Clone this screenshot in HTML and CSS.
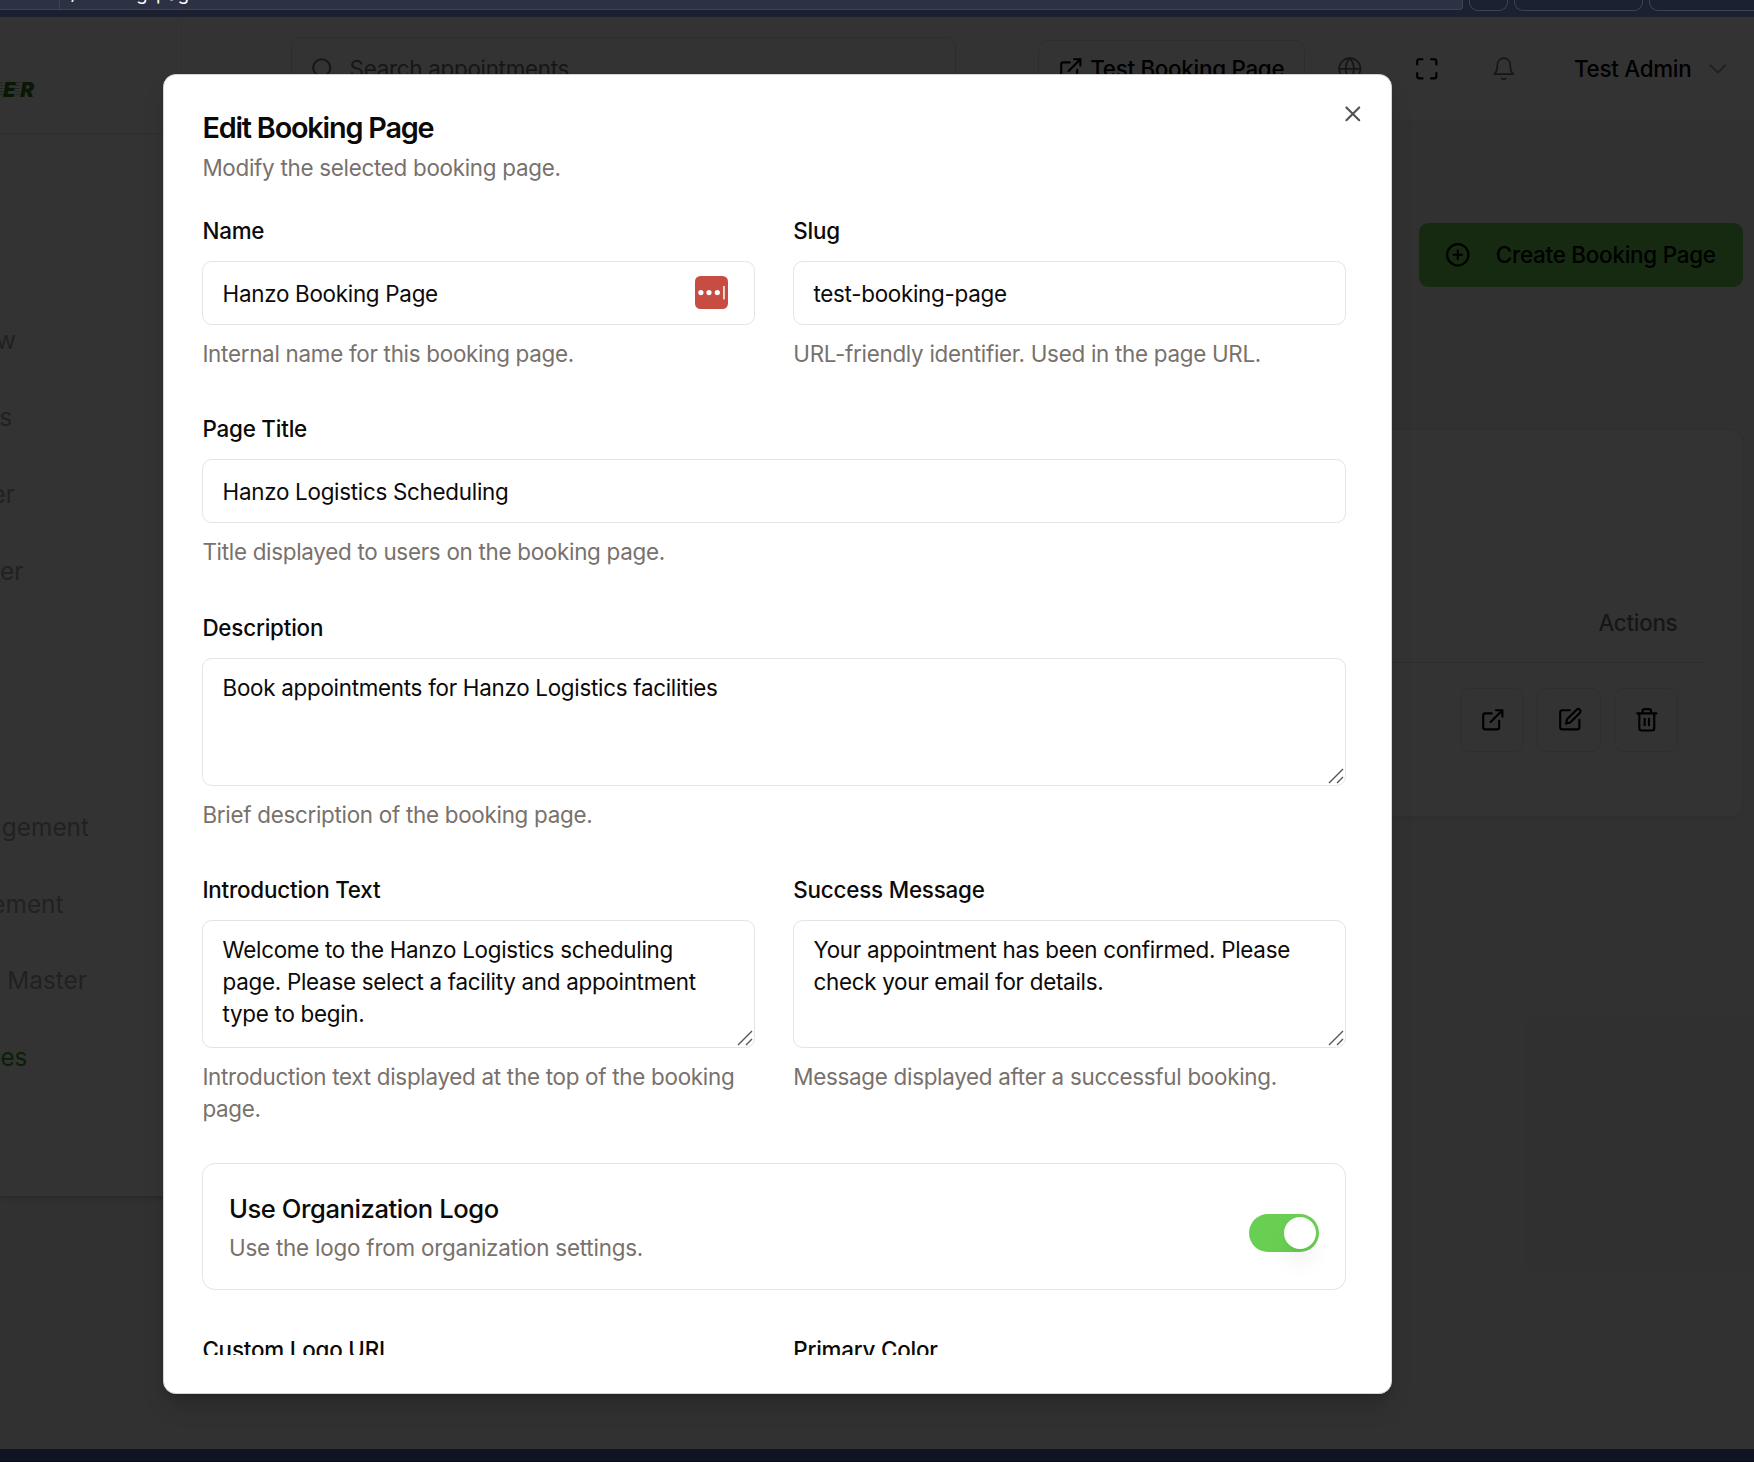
FILE: index.html
```html
<!DOCTYPE html>
<html lang="en">
<head>
<meta charset="utf-8">
<title>Booking Pages</title>
<link rel="stylesheet" href="styles.css">
</head>
<body>
<svg class="defs" aria-hidden="true">
  <symbol id="i-link" viewBox="0 0 24 24"><path d="M15 3h6v6M10 14 21 3M18 13v6a2 2 0 0 1-2 2H5a2 2 0 0 1-2-2V8a2 2 0 0 1 2-2h6"/></symbol>
  <symbol id="i-grip" viewBox="0 0 16 16"><path d="M1 15 15 1M9 15l6-6"/></symbol>
</svg>
<div class="window">
  <div class="toolbar">
    <div class="urlbar"><span class="site"></span><span class="path">/booking-pages</span></div>
    <span class="tool tool-a"></span><span class="tool tool-b"></span><span class="tool tool-c"></span>
  </div>

  <div class="viewport">
    <div class="app">
      <aside class="sidebar">
        <div class="brand"><span class="streak streak-a"></span>E<span class="streak"></span>R</div>
        <nav class="nav">
          <a class="nav-item n1">w</a>
          <a class="nav-item n2">s</a>
          <a class="nav-item n3">er</a>
          <a class="nav-item n4">er</a>
          <a class="nav-item n5">gement</a>
          <a class="nav-item n6">ement</a>
          <a class="nav-item n7">Master</a>
          <a class="nav-item n8 active">es</a>
        </nav>
      </aside>
      <div class="main">
        <header class="header">
          <div class="search">
            <svg class="icon" viewBox="0 0 24 24"><circle cx="11" cy="11" r="8"/><path d="m21 21-4.3-4.3"/></svg>
            <span>Search appointments...</span>
          </div>
          <a class="test-btn"><svg class="icon"><use href="#i-link"/></svg><span>Test Booking Page</span></a>
          <svg class="icon globe" viewBox="0 0 24 24"><circle cx="12" cy="12" r="10"/><path d="M2 12h20M12 2a15 15 0 0 1 0 20 15 15 0 0 1 0-20"/></svg>
          <svg class="icon expand" viewBox="0 0 24 24"><path d="M8 3H5a2 2 0 0 0-2 2v3M21 8V5a2 2 0 0 0-2-2h-3M3 16v3a2 2 0 0 0 2 2h3M16 21h3a2 2 0 0 0 2-2v-3"/></svg>
          <svg class="icon bell" viewBox="0 0 24 24"><path d="M6 8a6 6 0 0 1 12 0c0 7 3 9 3 9H3s3-2 3-9M10.3 21a1.94 1.94 0 0 0 3.4 0"/></svg>
          <span class="user">Test Admin</span>
          <svg class="icon chevron" viewBox="0 0 24 24"><path d="m5 8.5 7 7 7-7"/></svg>
        </header>
        <div class="content">
          <button class="create"><svg class="icon" viewBox="0 0 24 24"><circle cx="12" cy="12" r="10"/><path d="M8 12h8M12 8v8"/></svg>Create Booking Page</button>
          <section class="card">
            <div class="thead">Actions</div>
            <div class="trow">
              <span class="action"><svg class="icon"><use href="#i-link"/></svg></span>
              <span class="action"><svg class="icon" viewBox="0 0 24 24"><path d="M12 3H5a2 2 0 0 0-2 2v14a2 2 0 0 0 2 2h14a2 2 0 0 0 2-2v-7"/><path d="M18.4 2.6a2.1 2.1 0 0 1 3 3L12.4 14.6l-4 1 1-4Z"/></svg></span>
              <span class="action"><svg class="icon" viewBox="0 0 24 24"><path d="M3 6h18M19 6v14a2 2 0 0 1-2 2H7a2 2 0 0 1-2-2V6M8 6V4a2 2 0 0 1 2-2h4a2 2 0 0 1 2 2v2M10 11v6M14 11v6"/></svg></span>
            </div>
          </section>
        </div>
      </div>
    </div>

    <div class="overlay"></div>
    <div class="dialog" role="dialog">
      <svg class="icon close" viewBox="0 0 24 24"><path d="M18 6 6 18M6 6l12 12"/></svg>
      <div class="dialog-body">
        <div class="dialog-head">
          <h2>Edit Booking Page</h2>
          <p>Modify the selected booking page.</p>
        </div>
        <form class="form">
          <div class="cols">
            <div class="field">
              <label>Name</label>
              <div class="control">
                <input type="text" value="Hanzo Booking Page">
                <svg class="pass" viewBox="0 0 33 33"><rect width="33" height="33" rx="5.5" fill="#c74c42"/><g fill="#fff"><circle cx="5.9" cy="16.6" r="2.6"/><circle cx="14" cy="16.6" r="2.6"/><circle cx="22.3" cy="16.6" r="2.6"/><rect x="28.2" y="10" width="1.5" height="13.4"/></g></svg>
              </div>
              <p>Internal name for this booking page.</p>
            </div>
            <div class="field">
              <label>Slug</label>
              <div class="control"><input type="text" value="test-booking-page"></div>
              <p>URL-friendly identifier. Used in the page URL.</p>
            </div>
          </div>
          <div class="field">
            <label>Page Title</label>
            <div class="control"><input type="text" value="Hanzo Logistics Scheduling"></div>
            <p>Title displayed to users on the booking page.</p>
          </div>
          <div class="field">
            <label>Description</label>
            <div class="control"><textarea>Book appointments for Hanzo Logistics facilities</textarea><svg class="grip"><use href="#i-grip"/></svg></div>
            <p>Brief description of the booking page.</p>
          </div>
          <div class="cols">
            <div class="field">
              <label>Introduction Text</label>
              <div class="control"><textarea>Welcome to the Hanzo Logistics scheduling page. Please select a facility and appointment type to begin.</textarea><svg class="grip"><use href="#i-grip"/></svg></div>
              <p>Introduction text displayed at the top of the booking page.</p>
            </div>
            <div class="field">
              <label>Success Message</label>
              <div class="control"><textarea>Your appointment has been confirmed. Please check your email for details.</textarea><svg class="grip"><use href="#i-grip"/></svg></div>
              <p>Message displayed after a successful booking.</p>
            </div>
          </div>
          <div class="toggle-card">
            <div>
              <div class="toggle-title">Use Organization Logo</div>
              <p>Use the logo from organization settings.</p>
            </div>
            <span class="switch"><span class="thumb"></span></span>
          </div>
          <div class="cols">
            <div class="field"><label>Custom Logo URL</label></div>
            <div class="field"><label>Primary Color</label></div>
          </div>
        </form>
      </div>
    </div>
  </div>
  <div class="bottom"></div>
</div>
</body>
</html>
```
FILE: styles.css
```css
* { box-sizing: border-box; }
body {
  margin: 0;
  font-family: Inter, "Liberation Sans", sans-serif;
  font-size: 22.4px;
  line-height: 32px;
  letter-spacing: -.28px;
  color: #0c0a09;
  overflow: hidden;
}
p, h2 { margin: 0; }
.defs { position: absolute; width: 0; height: 0; }
.icon {
  width: 25.6px;
  height: 25.6px;
  flex: none;
  fill: none;
  stroke: currentColor;
  stroke-width: 2;
  stroke-linecap: round;
  stroke-linejoin: round;
}
.window { display: flex; flex-direction: column; width: 1754px; height: 1462px; overflow: hidden; }

/* browser toolbar */
.toolbar { display: flex; height: 17px; flex: none; background: #1c2132; overflow: hidden; }
.urlbar {
  display: flex;
  width: 1463px;
  height: 10px;
  flex: none;
  background: #2d3144;
  border-bottom: 1px solid #3e4258;
  border-right: 1px solid #3e4258;
  border-radius: 0 0 4px 0;
}
.site { width: 60px; height: 9px; border-right: 1px solid #3e4258; }
.path { margin: -19px 0 0 11px; height: 24px; font-size: 18.4px; line-height: 24px; letter-spacing: 0; color: #fff; }
.tool { height: 11px; flex: none; border: 1px solid #3e4258; border-top: 0; border-radius: 0 0 9px 9px; }
.tool-a { width: 39px; margin-left: 6px; }
.tool-b { width: 129px; margin-left: 6px; }
.tool-c { width: 129px; margin-left: 6px; }
.bottom { height: 13px; flex: none; background: #0e1424; border-bottom: 1px solid #080b16; }

/* page behind the dialog */
.viewport { position: relative; flex: 1; min-height: 0; }
.app { display: flex; align-items: flex-start; height: 100%; background: #f2f2f2; }
.sidebar {
  width: 182px;
  height: 1179px;
  flex: none;
  background: #fff;
  border-right: 1px solid #eee;
  box-shadow: 0 2px 5px rgba(0, 0, 0, .16);
}
.brand {
  display: flex;
  align-items: center;
  height: 117px;
  padding: 29px 0 0;
  border-bottom: 1px solid #e5e5e5;
  font-size: 20.5px;
  font-weight: 900;
  font-style: italic;
  letter-spacing: -1px;
  color: #2f7a1d;
}
.streak { width: 5.5px; height: 15px; background: repeating-linear-gradient(#9cc492 0 1.5px, transparent 1.5px 3px); }
.streak-a { width: 3px; }
.nav { display: flex; flex-direction: column; padding-top: 168px; }
.nav-item { display: flex; justify-content: flex-end; height: 76.8px; align-items: center; font-size: 24.4px; letter-spacing: 0; color: #a8a5a2; }
.n1 { width: 16px; } .n2 { width: 12px; } .n3 { width: 15px; } .n4 { width: 23.5px; }
.n5 { width: 89px; margin-top: 179.2px; } .n6 { width: 63.5px; } .n7 { width: 87px; } .n8 { width: 27.5px; }
.nav-item.active { color: #389b24; }

.main { flex: 1; }
.header { display: flex; align-items: center; height: 104px; background: #fff; border-bottom: 1px solid #e8e8e8; }
.search {
  display: flex;
  align-items: center;
  gap: 14px;
  width: 665px;
  height: 64px;
  margin-left: 109px;
  padding-left: 18px;
  border: 1px solid #e2e2e2;
  border-radius: 9.6px;
  color: #78716c;
}
.search span, .test-btn span, .user { padding-top: 1px; }
.test-btn {
  display: flex;
  align-items: center;
  gap: 6.4px;
  width: 267px;
  height: 57.6px;
  margin-left: 82px;
  padding-left: 19.2px;
  border: 1px solid #e2e2e2;
  border-radius: 9.6px;
  font-weight: 500;
  color: #000;
  white-space: nowrap;
}
.globe { margin-left: 32.4px; stroke-width: 1.6; color: #6e6e6e; }
.expand { margin-left: 51.2px; color: #000; }
.bell { margin-left: 51.2px; stroke-width: 1.6; color: #6e6e6e; }
.user { margin-left: 57.4px; width: 118px; font-weight: 500; color: #000; white-space: nowrap; }
.chevron { margin-left: 13.5px; stroke-width: 1.7; color: #999; }

.content { display: flex; flex-direction: column; align-items: flex-end; padding: 102px 11px 0 0; }
.create {
  display: flex;
  align-items: center;
  gap: 25.6px;
  width: 324px;
  height: 64px;
  padding: 0 0 0 25.6px;
  border: 0;
  border-radius: 9.6px;
  background: #69cf53;
  font: 500 22.4px/32px Inter, sans-serif;
  letter-spacing: -.24px;
  color: #000;
  white-space: nowrap;
}
.card {
  width: 1522px;
  height: 388px;
  margin-top: 141.5px;
  padding: 155px 39px 0 0;
  background: #fff;
  border: 1px solid #e8e8e8;
  border-radius: 12.8px;
  box-shadow: 0 2px 3px rgba(0, 0, 0, .05);
}
.thead { height: 78px; padding: 22.5px 25.6px 0 0; border-bottom: 1px solid #e2e2e2; text-align: right; font-weight: 500; color: #78716c; }
.trow { display: flex; justify-content: flex-end; gap: 13px; padding: 25px 24.6px 0 0; }
.action { display: flex; align-items: center; justify-content: center; width: 64px; height: 64px; border: 1px solid #e4e4e4; border-radius: 9.6px; color: #000; }

/* dialog */
.overlay { position: absolute; inset: 0; background: rgba(0, 0, 0, .8); }
.dialog {
  position: absolute;
  left: 162.5px;
  top: 56.5px;
  width: 1229px;
  height: 1320.5px;
  padding: 38.4px 38.4px 38.4px 38.9px;
  background: #fff;
  border: 1px solid #d4d4d4;
  border-radius: 12.8px;
  box-shadow: 0 16px 24px -5px rgba(0, 0, 0, .18), 0 6px 10px -6px rgba(0, 0, 0, .18);
}
.dialog-body { height: 100%; padding: 1px 6.4px 0 0; overflow: hidden; display: flex; flex-direction: column; gap: 25.6px; }
.close { position: absolute; right: 25.2px; top: 26px; color: #545352; }
.dialog-head { display: flex; flex-direction: column; gap: 9.6px; }
h2 { font-size: 28.8px; line-height: 28.8px; font-weight: 600; letter-spacing: -1.18px; }
p { color: #78716c; }
.form { display: flex; flex-direction: column; gap: 38.4px; }
.cols { display: grid; grid-template-columns: 1fr 1fr; gap: 38.4px; }
.field { display: flex; flex-direction: column; gap: 12.8px; }
label { padding-top: 4px; font-weight: 500; line-height: 34.4px; letter-spacing: -.2px; }
.control { position: relative; display: flex; }
input, textarea {
  width: 100%;
  height: 64px;
  padding: 12.8px 19.2px;
  border: 1px solid #e4e4e4;
  border-radius: 9.6px;
  background: #fff;
  font: inherit;
  letter-spacing: inherit;
  color: inherit;
  outline: 0;
}
textarea { height: 128px; resize: none; overflow: hidden; }
.pass { position: absolute; right: 27px; top: 15px; width: 33px; height: 33px; }
.grip { position: absolute; right: 2px; bottom: 2px; width: 16px; height: 16px; fill: none; stroke: #555; stroke-width: 1.4; }
.toggle-card {
  display: flex;
  justify-content: space-between;
  align-items: center;
  padding: 25.6px;
  border: 1px solid #e4e4e4;
  border-radius: 12.8px;
}
.toggle-title { margin-bottom: 3.2px; font-size: 25.6px; line-height: 38.4px; font-weight: 500; letter-spacing: -.43px; }
.toggle-card p { letter-spacing: -.21px; }
.switch { display: flex; width: 70.4px; height: 38.4px; margin-top: 12px; padding: 3.2px; justify-content: flex-end; border-radius: 20px; background: #69cf53; }
.thumb { width: 32px; height: 32px; border-radius: 50%; background: #fff; box-shadow: 0 16px 24px -5px rgba(0, 0, 0, .1), 0 6px 10px -6px rgba(0, 0, 0, .1); }
```
